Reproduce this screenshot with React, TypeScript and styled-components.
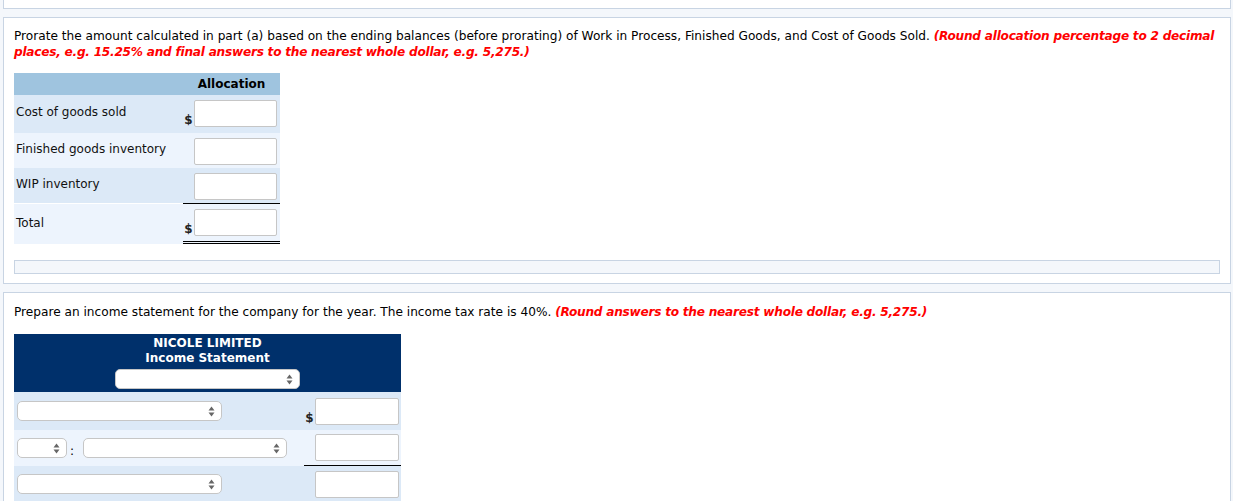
import React from 'react'
import styled, { createGlobalStyle } from 'styled-components'

const GlobalStyle = createGlobalStyle`
  body {
    margin: 0;
    background: #f4f7fb;
    font-family: 'DejaVu Sans', Verdana, sans-serif;
    color: #000;
  }
`

const Page = styled.div`
  display: flex;
  flex-direction: column;
  gap: 8px;
  padding: 0 2px 0 3px;
`

const TopStub = styled.div`
  height: 9px;
  background: #fff;
  border: 1px solid #c8d4e3;
  border-top: none;
  box-sizing: border-box;
`

const Panel = styled.section<{ $padTop?: number; $padBottom?: number }>`
  background: #fff;
  border: 1px solid #c8d4e3;
  padding: ${({ $padTop }) => $padTop ?? 10}px 10px ${({ $padBottom }) => $padBottom ?? 9}px 10px;
`

const Instructions = styled.p`
  margin: 0;
  font-size: 12.15px;
  line-height: 16px;
`

const Hint = styled.span`
  color: #f00;
  font-weight: bold;
  font-style: italic;
  letter-spacing: -0.25px;
`

const AllocTable = styled.div`
  margin-top: 13px;
  width: 266px;
  display: flex;
  flex-direction: column;
`

const AllocHeader = styled.div`
  display: grid;
  grid-template-columns: 169px 97px;
  height: 22px;
  background: #9fc4df;
  font-size: 12px;
  font-weight: bold;
  align-items: center;
  text-align: center;
`

const AllocRow = styled.div<{ $alt?: boolean; $h: number }>`
  display: grid;
  grid-template-columns: 169px 97px;
  height: ${({ $h }) => $h}px;
  box-sizing: border-box;
  background: ${({ $alt }) => ($alt ? '#edf4fd' : '#dce9f7')};
  align-items: start;
`

const Label = styled.div<{ $top: number }>`
  margin-top: ${({ $top }) => $top}px;
  font-size: 12px;
  line-height: 15px;
  padding-left: 2px;
  color: #111;
`

const AmountCell = styled.div<{ $double?: boolean }>`
  display: flex;
  align-items: flex-start;
  height: 100%;
  box-sizing: border-box;
  padding: 5px 3px 0 0;
  ${({ $double }) => ($double ? 'border-bottom: 3px double #000;' : '')}
`

const Dollar = styled.span`
  width: 11px;
  font-size: 12px;
  font-weight: bold;
  line-height: 12px;
  padding-bottom: 1px;
  text-align: center;
  color: #222;
`

const Field = styled.div<{ $w?: number }>`
  width: ${({ $w }) => $w ?? 83}px;
  height: 27px;
  box-sizing: border-box;
  border: 1px solid #c6c6c6;
  border-radius: 2px;
  background: #fff;
`

const Amount = styled.div`
  display: flex;
  align-items: flex-end;
`

const TotalRule = styled.div`
  display: grid;
  grid-template-columns: 169px 97px;
  height: 1px;
  & > div:last-child {
    background: #000;
  }
`

const Spacer = styled.div``

const NoteBar = styled.div`
  margin-top: 16px;
  height: 12px;
  background: #f4f7fb;
  border: 1px solid #c8d4e3;
`

const Statement = styled.div`
  margin-top: 14px;
  width: 387px;
`

const StatementHead = styled.div`
  background: #00306b;
  color: #fff;
  font-size: 12px;
  font-weight: bold;
  line-height: 15px;
  text-align: center;
  padding: 2px 0 3px;
  display: flex;
  flex-direction: column;
  align-items: center;
`

const HeadSelect = styled.div`
  margin-top: 3px;
`

const StatementRow = styled.div<{ $alt?: boolean; $h: number }>`
  display: grid;
  grid-template-columns: 290px 97px;
  height: ${({ $h }) => $h}px;
  background: ${({ $alt }) => ($alt ? '#edf4fd' : '#dce9f7')};
`

const LeftCell = styled.div`
  display: flex;
  align-items: center;
  padding-left: 3px;
`

const RightCell = styled.div<{ $rule?: boolean }>`
  display: flex;
  align-items: center;
  box-sizing: border-box;
  padding-right: 2px;
  ${({ $rule }) => ($rule ? 'border-bottom: 1px solid #000;' : '')}
`

const Colon = styled.span`
  width: 16px;
  font-size: 12px;
  padding-top: 6px;
  padding-left: 3px;
  box-sizing: border-box;
`

const SelectBox = styled.div<{ $w: number }>`
  width: ${({ $w }) => $w}px;
  height: 20px;
  box-sizing: border-box;
  border: 1px solid #c6c6c6;
  border-radius: 5px;
  background: #fff;
  display: flex;
  align-items: center;
  justify-content: flex-end;
  padding-right: 6px;
`

const Arrows = () => (
  <svg width="7" height="11" viewBox="0 0 7 11">
    <path d="M3.5 0.5 L6.5 4.5 L0.5 4.5 Z" fill="#666" />
    <path d="M3.5 10.5 L6.5 6.5 L0.5 6.5 Z" fill="#666" />
  </svg>
)

const Select = ({ w }: { w: number }) => (
  <SelectBox $w={w}>
    <Arrows />
  </SelectBox>
)

const allocRows = [
  { label: 'Cost of goods sold', h: 38, top: 10, dollar: true },
  { label: 'Finished goods inventory', h: 35, top: 9, dollar: false },
  { label: 'WIP inventory', h: 35, top: 9, dollar: false },
]

const App: React.FC = () => {
  return (
    <>
      <GlobalStyle />
      <Page>
        <TopStub />
        <Panel>
          <Instructions>
            Prorate the amount calculated in part (a) based on the ending balances (before prorating) of Work in
            Process, Finished Goods, and Cost of Goods Sold.{' '}
            <Hint>
              (Round allocation percentage to 2 decimal places, e.g. 15.25% and final answers to the nearest whole
              dollar, e.g. 5,275.)
            </Hint>
          </Instructions>
          <AllocTable>
            <AllocHeader>
              <Spacer />
              <div>Allocation</div>
            </AllocHeader>
            {allocRows.map((r, i) => (
              <AllocRow key={r.label} $h={r.h} $alt={i % 2 === 1}>
                <Label $top={r.top}>{r.label}</Label>
                <AmountCell>
                  <Amount>
                    <Dollar>{r.dollar ? '$' : ''}</Dollar>
                    <Field />
                  </Amount>
                </AmountCell>
              </AllocRow>
            ))}
            <TotalRule>
              <Spacer />
              <div />
            </TotalRule>
            <AllocRow $alt $h={40}>
              <Label $top={12}>Total</Label>
              <AmountCell $double>
                <Amount>
                  <Dollar>$</Dollar>
                  <Field />
                </Amount>
              </AmountCell>
            </AllocRow>
          </AllocTable>
          <NoteBar />
        </Panel>
        <Panel $padTop={11} $padBottom={0}>
          <Instructions>
            Prepare an income statement for the company for the year. The income tax rate is 40%.{' '}
            <Hint>(Round answers to the nearest whole dollar, e.g. 5,275.)</Hint>
          </Instructions>
          <Statement>
            <StatementHead>
              <div>NICOLE LIMITED</div>
              <div>Income Statement</div>
              <HeadSelect>
                <Select w={185} />
              </HeadSelect>
            </StatementHead>
            <StatementRow $h={38}>
              <LeftCell>
                <Select w={205} />
              </LeftCell>
              <RightCell>
                <Amount>
                  <Dollar>$</Dollar>
                  <Field $w={84} />
                </Amount>
              </RightCell>
            </StatementRow>
            <StatementRow $alt $h={36}>
              <LeftCell>
                <Select w={50} />
                <Colon>:</Colon>
                <Select w={204} />
              </LeftCell>
              <RightCell $rule>
                <Amount>
                  <Dollar />
                  <Field $w={84} />
                </Amount>
              </RightCell>
            </StatementRow>
            <StatementRow $h={36}>
              <LeftCell>
                <Select w={205} />
              </LeftCell>
              <RightCell>
                <Amount>
                  <Dollar />
                  <Field $w={84} />
                </Amount>
              </RightCell>
            </StatementRow>
          </Statement>
        </Panel>
      </Page>
    </>
  )
}

export default App
